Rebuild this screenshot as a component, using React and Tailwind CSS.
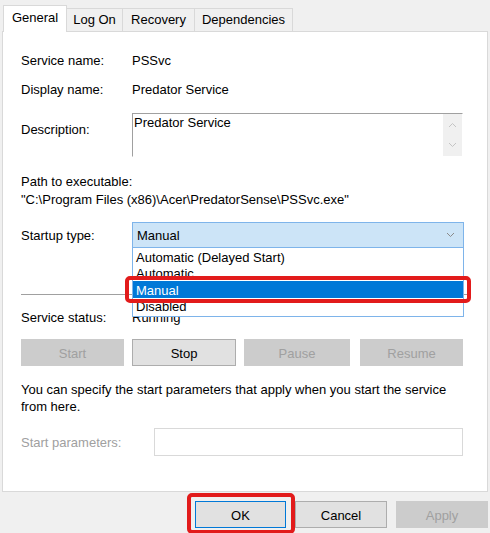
import React from "react";

const font = { fontFamily: '"Liberation Sans", Arial, sans-serif' };

function Chevron({ up = false, className = "" }) {
  return (
    <svg width="9" height="6" viewBox="0 0 9 6" className={className}>
      <path
        d={up ? "M1 5 L4.5 1.5 L8 5" : "M1 1 L4.5 4.5 L8 1"}
        fill="none"
        stroke="currentColor"
        strokeWidth="1"
      />
    </svg>
  );
}

function Tab({ label, active, width }) {
  if (active) {
    return (
      <div
        className={`relative z-10 -mb-px h-[27px] bg-white border border-b-0 border-[#d9d9d9] flex items-center justify-center ${width}`}
      >
        <span className="-mt-[3px]">{label}</span>
      </div>
    );
  }
  return (
    <div
      className={`h-[23px] bg-[#f0f0f0] border border-l-0 border-b-0 border-[#d9d9d9] flex items-center justify-center ${width}`}
    >
      {label}
    </div>
  );
}

function Btn({ label, disabled, className = "" }) {
  return (
    <div
      className={`h-[27px] pt-[2px] flex items-center justify-center border ${
        disabled
          ? "bg-[#cccccc] border-[#cccccc] text-[#a0a0a0]"
          : "bg-[#e1e1e1] border-[#adadad] text-black"
      } ${className}`}
    >
      {label}
    </div>
  );
}

export default function App() {
  return (
    <div
      className="relative w-[490px] h-[533px] bg-[#f0f0f0] overflow-hidden text-[13px] text-black"
      style={font}
    >
      {/* Tabs */}
      <div className="flex items-end h-[31px] pl-[3px]">
        <Tab label="General" active width="w-[64px]" />
        <Tab label="Log On" width="w-[56px]" />
        <Tab label="Recovery" width="w-[72px]" />
        <Tab label="Dependencies" width="w-[98px]" />
      </div>

      {/* Panel */}
      <div className="mx-[2px] h-[461px] bg-white border border-[#d9d9d9] px-[18px] flex flex-col">
        <div className="mt-[19px] h-[18px] pt-[2px] flex items-center">
          <span className="w-[111px]">Service name:</span>
          <span>PSSvc</span>
        </div>
        <div className="mt-[11px] h-[18px] pt-[2px] flex items-center">
          <span className="w-[111px]">Display name:</span>
          <span>Predator Service</span>
        </div>
        <div className="mt-[15px] h-[44px] flex">
          <span className="w-[111px] pt-[7px]">Description:</span>
          <div className="w-[331px] h-[44px] border border-t-[#a0a0a0] border-l-[#a0a0a0] border-r-white border-b-white flex">
            <div className="flex-1 pl-px leading-[17px]">Predator Service</div>
            <div className="w-[19px] bg-[#f0f0f0] flex flex-col items-center justify-between py-[8px] text-[#c4c4c4]">
              <Chevron up />
              <Chevron />
            </div>
          </div>
        </div>
        <div className="mt-[15px] h-[18px] pt-[2px] flex items-center">Path to executable:</div>
        <div className="h-[18px] pt-[2px] flex items-center">
          "C:\Program Files (x86)\Acer\PredatorSense\PSSvc.exe"
        </div>
        <div className="mt-[14px] h-[26px] flex items-center">
          <span className="w-[111px] pt-[2px]">Startup type:</span>
          <div className="relative w-[332px] h-[26px]">
            <div className="h-full bg-[#cce4f7] border border-[#7eb4ea] flex items-center pl-[4px] pr-[8px]">
              <span className="flex-1 pt-[2px]">Manual</span>
              <Chevron className="text-[#8a8a8a]" />
            </div>
            {/* Dropdown list */}
            <div className="absolute z-20 left-0 top-full w-full h-[69px] bg-white border border-t-0 border-[#7eb4ea] pt-[1px] flex flex-col">
              <div className="h-[16px] pt-[2px] flex items-center pl-[3px]">Automatic (Delayed Start)</div>
              <div className="h-[16px] pt-[2px] flex items-center pl-[3px]">Automatic</div>
              <div className="h-[17px] pt-[2px] flex items-center pl-[3px] bg-[#0078d7] text-white">Manual</div>
              <div className="h-[17px] pt-[1px] flex items-center pl-[3px]">Disabled</div>
            </div>
            <div className="absolute z-30 left-[-7px] top-[54px] w-[346px] h-[27px] border-4 border-[#e21b1b] rounded-[5px]" />
          </div>
        </div>
        <div className="mt-[46px] h-px bg-[#a0a0a0]" />
        <div className="mt-[13px] h-[18px] pt-[2px] flex items-center">
          <span className="w-[111px]">Service status:</span>
          <span>Running</span>
        </div>
        <div className="mt-[13px] flex">
          <Btn label="Start" disabled className="w-[103px]" />
          <Btn label="Stop" className="ml-[8px] w-[104px]" />
          <Btn label="Pause" disabled className="ml-[8px] w-[106px]" />
          <Btn label="Resume" disabled className="ml-[10px] w-[103px]" />
        </div>
        <div className="mt-[15px] leading-[17px]">
          You can specify the start parameters that apply when you start the service
          <br />
          from here.
        </div>
        <div className="mt-[13px] h-[28px] flex items-center">
          <span className="w-[133px] pt-[2px] text-[#a0a0a0]">Start parameters:</span>
          <div className="w-[309px] h-[28px] border border-[#d9d9d9] bg-white" />
        </div>
      </div>

      {/* Bottom buttons */}
      <div className="mt-[9px] pr-[2px] flex justify-end">
        <div className="w-[91px] h-[27px] pt-[2px] bg-[#e1e1e1] border border-[#0078d7] flex items-center justify-center">
          OK
        </div>
        <div className="ml-[9px] w-[92px] h-[27px] pt-[2px] bg-[#e1e1e1] border border-[#adadad] flex items-center justify-center">
          Cancel
        </div>
        <div className="ml-[9px] w-[92px] h-[27px] pt-[2px] bg-[#cccccc] border border-[#cccccc] text-[#a0a0a0] flex items-center justify-center">
          Apply
        </div>
      </div>

      {/* Highlight around OK */}
      <div className="absolute left-[187px] top-[493px] w-[108px] h-[41px] border-4 border-[#e21b1b] rounded-[5px]" />
    </div>
  );
}
